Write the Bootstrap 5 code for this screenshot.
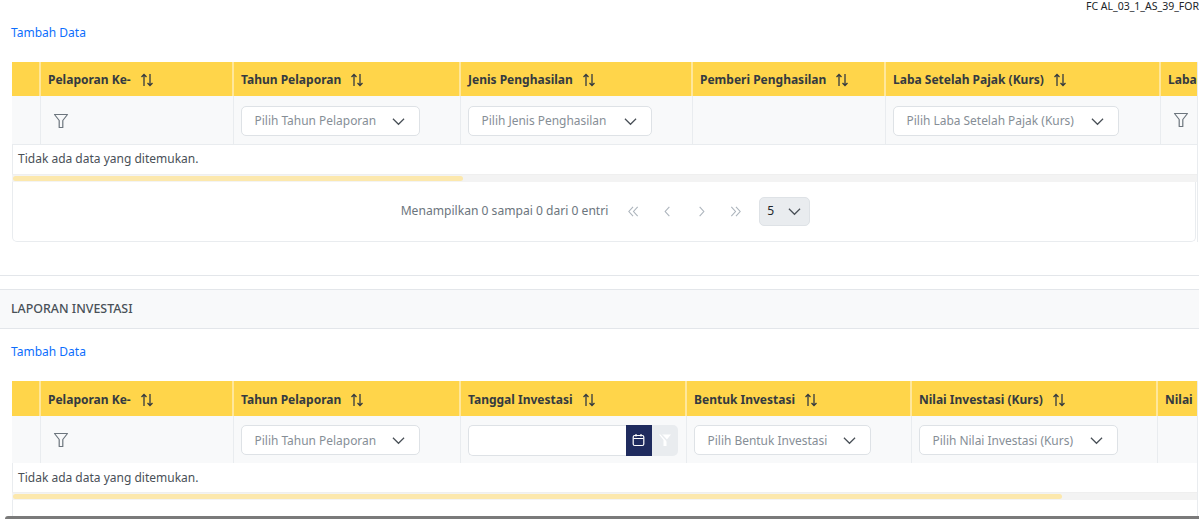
<!DOCTYPE html>
<html lang="id">
<head>
<meta charset="utf-8">
<title>Laporan</title>
<link href="https://cdn.jsdelivr.net/npm/bootstrap@5.3.0/dist/css/bootstrap.min.css" rel="stylesheet">
<style>
html,body{height:519px;overflow:hidden;background:#fff}
body{font-family:"Noto Sans",sans-serif;font-size:12px;color:#495057}
.doc-code{height:19px;white-space:nowrap;font-size:10.5px;line-height:12px;color:#212529;margin-left:1086px;width:113px;overflow:hidden}
.add-row{padding-left:11px;height:43px;padding-top:5px;line-height:17px}
.add-row a{color:#0d6efd;text-decoration:none;font-size:12px}
.grid-wrap{margin-left:12px;width:1186px;overflow:hidden;border-right:1px solid #e9ecef}
.grid-scroll{overflow:hidden}
.data-grid{table-layout:fixed;border-collapse:collapse;margin:0}
.data-grid th{background:#ffd54a;height:34px;padding:2px 7px 0;font-weight:700;font-size:12px;color:#343a40;white-space:nowrap;border-right:2px solid #ffe79b;border-bottom:0;vertical-align:middle;overflow:hidden}
.data-grid td{background:#f8f9fa;height:48px;padding:2px 7px 0;border-right:1px solid #e9ecef;border-bottom:1px solid #e9ecef;vertical-align:middle}
.grid-two .data-grid th{height:35px;padding-top:3px}
.grid-two .data-grid td{border-bottom:0;height:47px}
.sort-ic{width:14px;height:14px;margin-left:6px;vertical-align:-3px}
.pick{display:inline-flex;align-items:center;justify-content:space-between;height:30px;background:#fff;border:1px solid #dee2e6;border-radius:5px;padding:1px 14px 0 13px;color:#868e96;white-space:nowrap;font-size:11.95px;line-height:1}
.pick svg{width:13px;height:13px;flex:none}
.funnel{width:16px;height:16px;display:block;margin-left:5px}
.funnel-2{margin-left:5px;margin-top:-1px}
.empty-row{height:29px;line-height:28px;padding-left:5px;background:#fff;font-size:12px;border-left:1px solid #e9ecef;color:#495057}
.grid-two .empty-row{line-height:30px}
.sbar{height:8px;background:#f3f3f3;padding:1px 0 2px 1px;border-top:1px solid #efefef}
.sbar div{height:5px;background:#fce8ad;border-radius:3px}
.pager-box{height:60px;border:1px solid #e9ecef;border-top:0;border-radius:0 0 5px 5px;display:flex;align-items:center;justify-content:center;margin-right:1px;padding-left:3px;gap:0;font-size:12.1px;color:#6c757d}
.pager-box .pg-ic{width:34px;display:flex;justify-content:center}
.pager-box .pg-ic svg{width:13px;height:13px}
.pg-label{margin-right:8px}
.pg-size{width:51px;height:29px;margin-left:7px;background:#e9ecef;border:1px solid #dee2e6;border-radius:5px;display:flex;align-items:center;justify-content:space-between;padding:0 8px 0 7px;color:#212529}
.pg-size svg{width:13px;height:13px}
.sec-gap{height:34px;border-bottom:1px solid #e3e6ea}
.sec-head{margin-top:13px;height:40px;background:#f8f9fa;border-top:1px solid #e3e6ea;border-bottom:1px solid #e3e6ea;padding-left:11px;line-height:38px;font-weight:500;font-size:12.4px;color:#495057}
.add-two{height:52px;padding-top:14px}
.date-wrap{display:flex;align-items:stretch;height:31px;width:210px}
.date-input{width:158px;background:#fff;border:1px solid #dee2e6;border-right:0;border-radius:5px 0 0 5px}
.date-btn{width:26px;background:#1f2b5e;display:flex;align-items:center;justify-content:center}
.date-clear{width:26px;background:#e9ecef;border-radius:0 5px 5px 0;display:flex;align-items:center;justify-content:center}
.tail-fill{height:16px;border-left:1px solid #e9ecef}
.page-track{height:3px;margin-left:5px;background:#7a7a7a;border-radius:3px 0 0 0}
</style>
</head>
<body>
<div class="doc-code">FC AL_03_1_AS_39_FOR</div>
<div class="add-row"><a href="#">Tambah Data</a></div>

<svg width="0" height="0" class="d-block position-absolute">
  <defs>
    <symbol id="i-sort" viewBox="0 0 14 14"><path d="M4 13V1.500M1.500 4 4 1.500 6.500 4M10 1v11.500M7.500 10l2.500 2.500 2.500-2.500" fill="none" stroke="currentColor" stroke-width="1.300"/></symbol>
    <symbol id="i-down" viewBox="0 0 14 14"><path d="M1 4l6 6 6-6" fill="none" stroke="#495057" stroke-width="1.300"/></symbol>
    <symbol id="i-funnel" viewBox="0 0 16 16"><path d="M1.500 1.500h13L9.800 7.500v7H6.200v-7z" fill="none" stroke="#6c757d" stroke-width="1.200" stroke-linejoin="round"/></symbol>
    <symbol id="i-first" viewBox="0 0 14 14"><path d="M6.500 2 2 7l4.500 5M11.500 2 7 7l4.500 5" fill="none" stroke="#adb5bd" stroke-width="1.200"/></symbol>
    <symbol id="i-prev" viewBox="0 0 14 14"><path d="M9 2 4.500 7 9 12" fill="none" stroke="#adb5bd" stroke-width="1.200"/></symbol>
    <symbol id="i-next" viewBox="0 0 14 14"><path d="M5 2l4.500 5L5 12" fill="none" stroke="#adb5bd" stroke-width="1.200"/></symbol>
    <symbol id="i-last" viewBox="0 0 14 14"><path d="M2.500 2 7 7l-4.500 5M7.500 2 12 7l-4.500 5" fill="none" stroke="#adb5bd" stroke-width="1.200"/></symbol>
  </defs>
</svg>

<div class="grid-wrap">
  <div class="grid-scroll">
    <table class="data-grid table">
      <colgroup><col style="width:28px"><col style="width:193px"><col style="width:227px"><col style="width:232px"><col style="width:193px"><col style="width:275px"><col style="width:200px"></colgroup>
      <thead><tr>
        <th></th>
        <th>Pelaporan Ke- <svg class="sort-ic"><use href="#i-sort"/></svg></th>
        <th>Tahun Pelaporan <svg class="sort-ic"><use href="#i-sort"/></svg></th>
        <th>Jenis Penghasilan <svg class="sort-ic"><use href="#i-sort"/></svg></th>
        <th>Pemberi Penghasilan <svg class="sort-ic"><use href="#i-sort"/></svg></th>
        <th>Laba Setelah Pajak (Kurs) <svg class="sort-ic"><use href="#i-sort"/></svg></th>
        <th>Laba</th>
      </tr></thead>
      <tbody><tr>
        <td></td>
        <td><svg class="funnel"><use href="#i-funnel"/></svg></td>
        <td><span class="pick" style="width:179px">Pilih Tahun Pelaporan <svg><use href="#i-down"/></svg></span></td>
        <td><span class="pick" style="width:184px">Pilih Jenis Penghasilan <svg><use href="#i-down"/></svg></span></td>
        <td></td>
        <td><span class="pick" style="width:226px">Pilih Laba Setelah Pajak (Kurs) <svg><use href="#i-down"/></svg></span></td>
        <td><svg class="funnel funnel-2"><use href="#i-funnel"/></svg></td>
      </tr></tbody>
    </table>
  </div>
  <div class="empty-row">Tidak ada data yang ditemukan.</div>
  <div class="sbar"><div style="width:450px"></div></div>
  <div class="pager-box">
    <span class="pg-label">Menampilkan 0 sampai 0 dari 0 entri</span>
    <span class="pg-ic"><svg><use href="#i-first"/></svg></span>
    <span class="pg-ic"><svg><use href="#i-prev"/></svg></span>
    <span class="pg-ic"><svg><use href="#i-next"/></svg></span>
    <span class="pg-ic"><svg><use href="#i-last"/></svg></span>
    <span class="pg-size">5 <svg><use href="#i-down"/></svg></span>
  </div>
</div>

<div class="sec-gap"></div>
<div class="sec-head">LAPORAN INVESTASI</div>
<div class="add-row add-two"><a href="#">Tambah Data</a></div>

<div class="grid-wrap grid-two">
  <div class="grid-scroll">
    <table class="data-grid table">
      <colgroup><col style="width:28px"><col style="width:193px"><col style="width:227px"><col style="width:226px"><col style="width:225px"><col style="width:246px"><col style="width:200px"></colgroup>
      <thead><tr>
        <th></th>
        <th>Pelaporan Ke- <svg class="sort-ic"><use href="#i-sort"/></svg></th>
        <th>Tahun Pelaporan <svg class="sort-ic"><use href="#i-sort"/></svg></th>
        <th>Tanggal Investasi <svg class="sort-ic"><use href="#i-sort"/></svg></th>
        <th>Bentuk Investasi <svg class="sort-ic"><use href="#i-sort"/></svg></th>
        <th>Nilai Investasi (Kurs) <svg class="sort-ic"><use href="#i-sort"/></svg></th>
        <th>Nilai</th>
      </tr></thead>
      <tbody><tr>
        <td></td>
        <td><svg class="funnel"><use href="#i-funnel"/></svg></td>
        <td><span class="pick" style="width:179px">Pilih Tahun Pelaporan <svg><use href="#i-down"/></svg></span></td>
        <td>
          <div class="date-wrap">
            <div class="date-input"></div>
            <div class="date-btn"><svg width="13" height="14" viewBox="0 0 13 14"><rect x="1.200" y="2.500" width="10.600" height="10" rx="1.500" fill="none" stroke="#fff" stroke-width="1.200"/><path d="M1.500 5.500h10M4 1v2.500M9 1v2.500" stroke="#fff" stroke-width="1.200"/></svg></div>
            <div class="date-clear"><svg width="14" height="14" viewBox="0 0 14 14"><path d="M1 1.500h12L8.500 7v6h-3V7z" fill="#fff"/><path d="M3 1l9 10" stroke="#e9ecef" stroke-width="1.500"/></svg></div>
          </div>
        </td>
        <td><span class="pick" style="width:177px">Pilih Bentuk Investasi <svg><use href="#i-down"/></svg></span></td>
        <td><span class="pick" style="width:199px">Pilih Nilai Investasi (Kurs) <svg><use href="#i-down"/></svg></span></td>
        <td></td>
      </tr></tbody>
    </table>
  </div>
  <div class="empty-row">Tidak ada data yang ditemukan.</div>
  <div class="sbar"><div style="width:1049px"></div></div>
  <div class="tail-fill"></div>
</div>
<div class="page-track"></div>
<script src="https://cdn.jsdelivr.net/npm/bootstrap@5.3.0/dist/js/bootstrap.bundle.min.js"></script>
</body>
</html>
